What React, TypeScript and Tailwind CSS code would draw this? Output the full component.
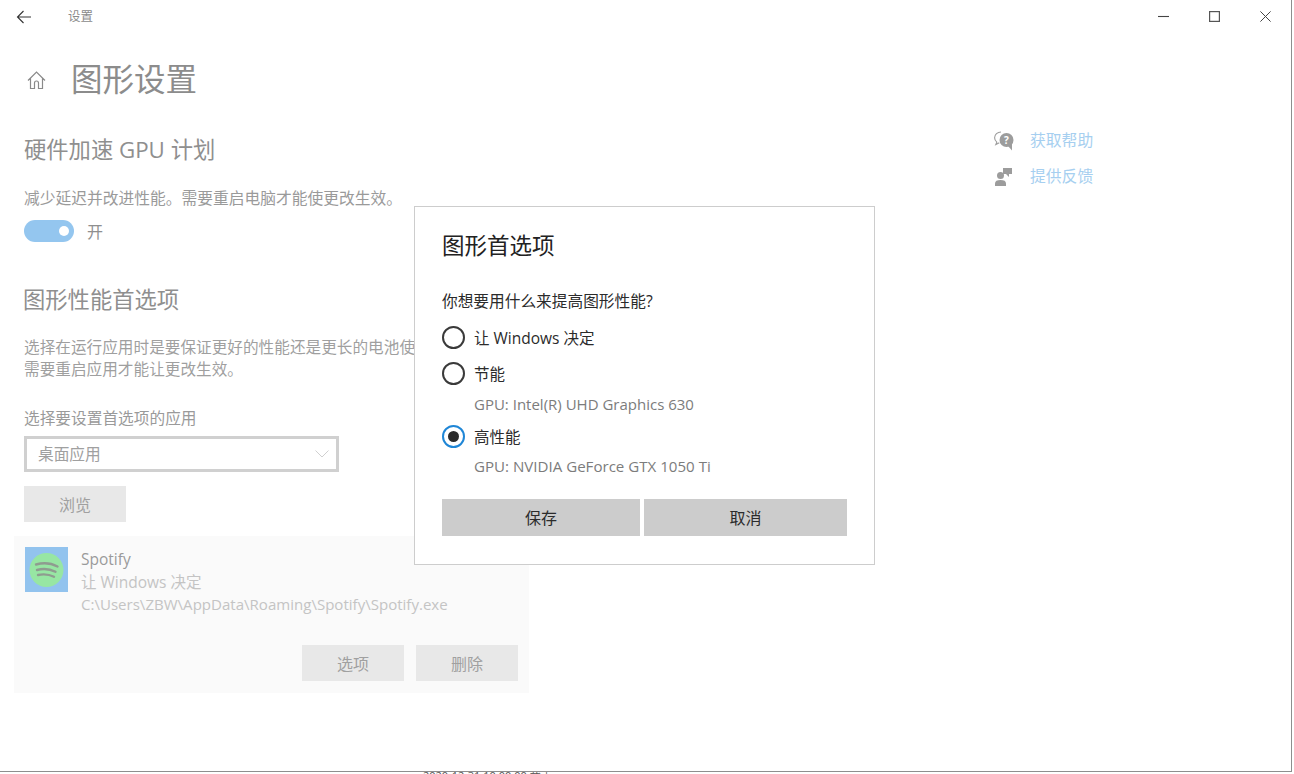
import React from "react";

function Radio({ checked }: { checked?: boolean }) {
  return checked ? (
    <span className="flex h-[23px] w-[23px] shrink-0 items-center justify-center rounded-full border-[2.5px] border-[#1f86d6]">
      <span className="h-[11px] w-[11px] rounded-full bg-[#2b2b2b]" />
    </span>
  ) : (
    <span className="h-[23px] w-[23px] shrink-0 rounded-full border-[2.5px] border-[#3a3a3a]" />
  );
}

function FadedButton({ label, width }: { label: string; width: string }) {
  return (
    <div className={`flex h-[36px] items-center justify-center bg-[#e8e8e8] pt-[1px] text-[16px] text-[#a0a0a0] ${width}`}>
      {label}
    </div>
  );
}

export default function App() {
  return (
    <div className="relative h-[774px] w-[1294px] overflow-hidden bg-white font-['Open_Sans','Noto_Sans_CJK_SC',sans-serif]">
      <div className="h-[772px] w-[1292px] border-r border-b border-[#8e8e8e]">
        {/* title bar */}
        <div className="flex h-[33px] items-center">
          <svg className="ml-[16px] h-[16px] w-[16px]" viewBox="0 0 16 16" fill="none" stroke="#333" strokeWidth="1.1">
            <path d="M15 8H1.500M7.500 2 1.500 8l6 6" />
          </svg>
          <span className="mt-[2px] ml-[36px] text-[12.5px] leading-none text-[#8a8a8a]">设置</span>
          <div className="mr-[20px] ml-auto flex items-center gap-[40px]">
            <svg className="h-[11px] w-[11px]" viewBox="0 0 11 11" fill="none" stroke="#444" strokeWidth="1.1"><path d="M0 5.500h11" /></svg>
            <svg className="h-[11px] w-[11px]" viewBox="0 0 11 11" fill="none" stroke="#555" strokeWidth="1.200"><rect x=".6" y=".6" width="9.800" height="9.800" /></svg>
            <svg className="h-[11px] w-[11px]" viewBox="0 0 11 11" fill="none" stroke="#444" strokeWidth="1"><path d="M.4.4l10.200 10.200M10.600.4.400 10.600" /></svg>
          </div>
        </div>

        <div className="flex">
          {/* main column */}
          <div className="w-[994px] pl-[24px]">
            <div className="mt-[24px] flex h-[44px] items-center">
              <svg className="mt-[1px] ml-[3px] h-[20px] w-[19px]" viewBox="0 0 19 20" fill="none" stroke="#8a8a8a" strokeWidth="1.2">
                <path d="M1 10.500 9.500 2 18 10.500M3.500 8.500V18.500h4v-5.500a2 2 0 0 1 4 0v5.500h4V8.500" />
              </svg>
              <h1 className="ml-[25px] text-[31.500px] leading-none font-normal text-[#8c8c8c]">图形设置</h1>
            </div>

            <h2 className="mt-[33px] h-[32px] text-[22.300px] leading-[32px] whitespace-nowrap text-[#8f8f8f]">硬件加速 GPU 计划</h2>
            <p className="mt-[21px] h-[22px] text-[15.750px] leading-[22px] whitespace-nowrap text-[#9a9a9a]">减少延迟并改进性能。需要重启电脑才能使更改生效。</p>
            <div className="mt-[11px] flex h-[22px] items-center">
              <span className="flex h-[22px] w-[50px] items-center justify-end rounded-full bg-[#94c6ef] pr-[5px]">
                <span className="h-[10px] w-[10px] rounded-full bg-white" />
              </span>
              <span className="mt-[2px] ml-[13px] text-[16px] leading-none text-[#8f8f8f]">开</span>
            </div>

            <h2 className="mt-[42px] -ml-[1px] h-[32px] text-[22.300px] leading-[32px] text-[#8f8f8f]">图形性能首选项</h2>
            <p className="mt-[20px] text-[15.650px] leading-[22px] whitespace-nowrap text-[#9f9f9f]">
              选择在运行应用时是要保证更好的性能还是更长的电池使用时间。
              <br />
              需要重启应用才能让更改生效。
            </p>
            <p className="mt-[27px] h-[22px] text-[15.700px] leading-[22px] text-[#9a9a9a]">选择要设置首选项的应用</p>
            <div className="mt-[7px] flex h-[36px] w-[315px] items-center justify-between border-[3px] border-[#d0d0d0] pr-[7px] pl-[11px]">
              <span className="pt-[2px] text-[15.700px] text-[#a0a0a0]">桌面应用</span>
              <svg className="h-[8px] w-[14px]" viewBox="0 0 14 8" fill="none" stroke="#d0d0d0" strokeWidth="1"><path d="M.5.500l6.500 6.500 6.500-6.500" /></svg>
            </div>
            <FadedButton label="浏览" width="mt-[14px] w-[102px]" />

            {/* app card */}
            <div className="mt-[14px] -ml-[10px] h-[157px] w-[515px] bg-[#fafafa] pt-[11px] pr-[11px] pl-[11px]">
              <div className="flex h-[98px]">
                <svg className="h-[45px] w-[43px] shrink-0" viewBox="0 0 43 45">
                  <rect width="43" height="45" fill="#92c3ee" />
                  <circle cx="21.500" cy="23" r="17" fill="#97e6a3" />
                  <g fill="none" stroke="#8f9c90" strokeWidth="2.400" strokeLinecap="round">
                    <path d="M11 17.500c7-2 15-1.500 21.500 2" />
                    <path d="M12 23c6-1.500 13-1 18.500 1.800" />
                    <path d="M13 28c5-1 11-.7 16 1.800" />
                  </g>
                </svg>
                <div className="mt-[1px] ml-[13px] whitespace-nowrap">
                  <div className="text-[15.500px] leading-[22.500px] text-[#9a9a9a]">Spotify</div>
                  <div className="text-[15.500px] leading-[22.500px] text-[#c4c4c4]">让 Windows 决定</div>
                  <div className="text-[15.050px] leading-[22.500px] text-[#c4c4c4]">C:\Users\ZBW\AppData\Roaming\Spotify\Spotify.exe</div>
                </div>
              </div>
              <div className="flex justify-end gap-[12px]">
                <FadedButton label="选项" width="w-[102px]" />
                <FadedButton label="删除" width="w-[102px]" />
              </div>
            </div>
          </div>

          {/* help links */}
          <div className="mt-[90px] text-[15.800px] text-[#a6cff0]">
            <div className="flex h-[35px] items-center">
              <svg className="h-[20px] w-[20px]" viewBox="0 0 20 20">
                <path d="M7 1C3.500 1 .6 3.500.6 6.800c0 1.800.9 3.300 2.200 4.300L1.800 13.500l3.500-1.800" fill="none" stroke="#9c9c9c" strokeWidth="1.100" />
                <circle cx="12.500" cy="9" r="7" fill="#9c9c9c" />
                <path d="M14 15l4 4.500v-7z" fill="#9c9c9c" />
                <text x="12.500" y="12.500" textAnchor="middle" fontSize="10" fontWeight="700" fill="#fff">?</text>
              </svg>
              <span className="ml-[16px]">获取帮助</span>
            </div>
            <div className="mt-[1px] flex h-[35px] items-center">
              <svg className="h-[20px] w-[20px]" viewBox="0 0 20 20" fill="#9c9c9c">
                <circle cx="6.500" cy="8.500" r="3.500" />
                <path d="M1 19v-2.500C1 14 3 13 6.500 13s5.500 1 5.500 3.500V19z" />
                <path d="M9 1h9v6h-3v3l-3-3h-3z" />
              </svg>
              <span className="ml-[16px]">提供反馈</span>
            </div>
          </div>
        </div>
      </div>

      {/* cut-off text of what lies behind the window */}
      <div className="h-[2px] overflow-hidden pl-[423px] text-[11px] leading-[14px] whitespace-nowrap text-[#555]">
        <div className="-mt-[3px]">2020-12-31 10:00:00 截 |</div>
      </div>

      {/* modal dialog */}
      <div className="absolute top-[206px] left-[414px] h-[359px] w-[461px] border border-[#cdcdcd] bg-white px-[27px] pt-[22px]">
        <h3 className="h-[34px] text-[22.500px] leading-[34px] font-normal text-[#222]">图形首选项</h3>
        <p className="mt-[26px] h-[24px] text-[15.700px] leading-[24px] text-[#2b2b2b]">你想要用什么来提高图形性能?</p>
        <div className="mt-[13px] flex h-[23px] items-center gap-[9px] text-[15.500px] text-[#2b2b2b]">
          <Radio />
          <span className="pt-[3px]">让 Windows 决定</span>
        </div>
        <div className="mt-[13px] flex h-[23px] items-center gap-[9px] text-[15.500px] text-[#2b2b2b]">
          <Radio />
          <span className="pt-[3px]">节能</span>
        </div>
        <p className="mt-[8px] ml-[32px] h-[22px] text-[15px] leading-[22px] text-[#7c7c7c]">GPU: Intel(R) UHD Graphics 630</p>
        <div className="mt-[10px] flex h-[23px] items-center gap-[9px] text-[15.500px] text-[#2b2b2b]">
          <Radio checked />
          <span className="pt-[3px]">高性能</span>
        </div>
        <p className="mt-[7px] ml-[32px] h-[22px] text-[15.100px] leading-[22px] text-[#7c7c7c]">GPU: NVIDIA GeForce GTX 1050 Ti</p>
        <div className="mt-[22px] flex w-[405px] gap-[4px]">
          <div className="flex h-[37px] w-[198px] items-center justify-center bg-[#cccccc] text-[16px] text-[#2b2b2b]">保存</div>
          <div className="flex h-[37px] w-[203px] items-center justify-center bg-[#cccccc] text-[16px] text-[#2b2b2b]">取消</div>
        </div>
      </div>
    </div>
  );
}
